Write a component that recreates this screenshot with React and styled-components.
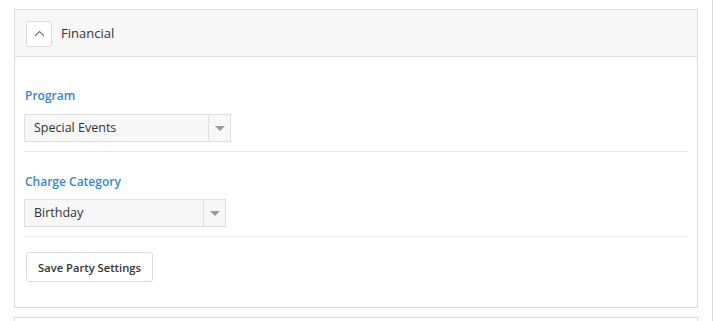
import React from "react";
import styled, { createGlobalStyle } from "styled-components";

const Global = createGlobalStyle`
  html, body { margin: 0; padding: 0; background: #fff; }
  body { font-family: "Open Sans", "Noto Sans", Arial, sans-serif; color: #333; }
`;

const Page = styled.div`
  width: 713px;
  height: 321px;
  box-sizing: border-box;
  border-right: 1px solid #d9d9d9;
  padding: 9px 14px 0 14px;
  overflow: hidden;
`;

const Panel = styled.section`
  border: 1px solid #dcdcdc;
  background: #fff;
  margin-bottom: 9px;
`;

const Header = styled.div`
  height: 46px;
  background: #f7f7f7;
  border-bottom: 1px solid #dcdcdc;
  display: flex;
  align-items: center;
  padding-left: 11px;
  gap: 9px;
`;

const Toggle = styled.button`
  width: 26px;
  height: 26px;
  box-sizing: border-box;
  border: 1px solid #dcdcdc;
  border-radius: 3px;
  background: #fff;
  display: flex;
  align-items: center;
  justify-content: center;
  padding: 0;
  margin-top: 1px;
`;

const Title = styled.span`
  font-size: 13px;
  color: #333;
`;

const Body = styled.div`
  padding: 30px 9px 25px 9px;
  display: flex;
  flex-direction: column;
`;

const Label = styled.label`
  font-size: 12px;
  font-weight: 600;
  line-height: 18px;
  color: #2e8ad2;
  margin-left: 1px;
  margin-top: ${(p) => p.$top || 0}px;
`;

const Select = styled.div`
  margin-top: ${(p) => p.$gap}px;
  width: ${(p) => p.$w}px;
  height: 28px;
  box-sizing: border-box;
  border: 1px solid #dedede;
  background: #f7f7f7;
  display: flex;
  align-items: stretch;
`;

const Value = styled.div`
  flex: 1;
  font-size: 12.5px;
  line-height: 26px;
  padding-left: 9px;
  color: #333;
`;

const Arrow = styled.div`
  width: 21px;
  border-left: 1px solid #dedede;
  display: flex;
  align-items: center;
  justify-content: center;
  &::after {
    content: "";
    border-left: 5px solid transparent;
    border-right: 5px solid transparent;
    border-top: 5px solid #9a9a9a;
  }
`;

const Divider = styled.hr`
  border: 0;
  border-top: 1px solid #e6e6e6;
  margin: 9px 0 0 0;
  width: 100%;
`;

const Button = styled.button`
  align-self: flex-start;
  margin: 15px 0 0 2px;
  height: 30px;
  width: 127px;
  box-sizing: border-box;
  border: 1px solid #dcdcdc;
  border-radius: 3px;
  background: #fff;
  font-family: inherit;
  font-size: 11.2px;
  font-weight: 600;
  color: #333;
  padding: 0;
`;

const NextPanel = styled.div`
  border: 1px solid #dcdcdc;
  border-bottom: 0;
  height: 20px;
`;

export default function App() {
  return (
    <>
      <Global />
      <Page>
        <Panel>
          <Header>
            <Toggle aria-label="collapse">
              <svg width="11" height="7" viewBox="0 0 11 7">
                <polyline points="1,6 5.5,1.5 10,6" fill="none" stroke="#777" strokeWidth="1.1" />
              </svg>
            </Toggle>
            <Title>Financial</Title>
          </Header>
          <Body>
            <Label>Program</Label>
            <Select $w={207} $gap={9}>
              <Value>Special Events</Value>
              <Arrow />
            </Select>
            <Divider />
            <Label $top={21}>Charge Category</Label>
            <Select $w={202} $gap={8}>
              <Value>Birthday</Value>
              <Arrow />
            </Select>
            <Divider />
            <Button>Save Party Settings</Button>
          </Body>
        </Panel>
        <NextPanel />
      </Page>
    </>
  );
}
